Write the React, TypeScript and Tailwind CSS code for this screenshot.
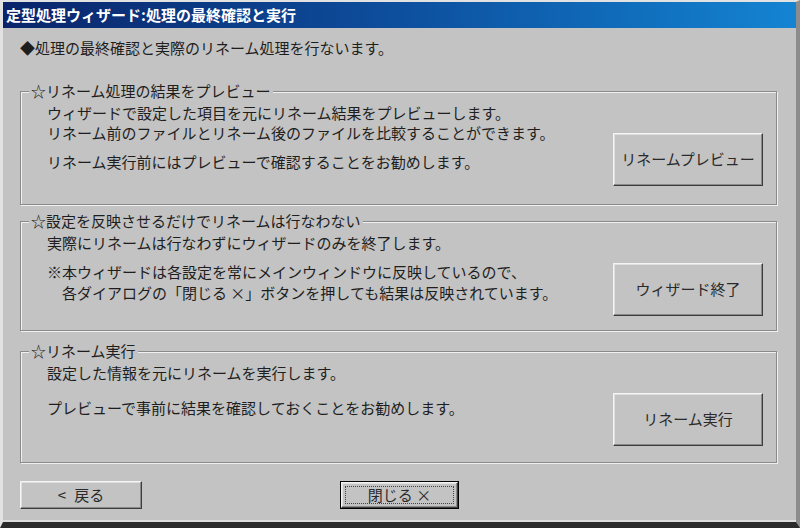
import type { ReactNode } from 'react';

const FONT = "font-['Noto_Sans_CJK_JP','Noto_Sans',sans-serif]";

function RaisedButton({ children, className = '' }: { children: ReactNode; className?: string }) {
  return (
    <button
      className={`flex items-center justify-center bg-[#c3c3c3] text-[15px] text-[#2a2a2a] border border-t-[#f4f4f4] border-l-[#f4f4f4] border-r-[#3c3c3c] border-b-[#3c3c3c] shadow-[inset_-1px_-1px_0_#8a8a8a,inset_1px_1px_0_#e0e0e0] ${className}`}
    >
      {children}
    </button>
  );
}

function GroupBox({
  legend,
  height,
  buttonLabel,
  children,
}: {
  legend: string;
  height: string;
  buttonLabel: string;
  children: ReactNode;
}) {
  return (
    <div
      className={`relative flex justify-between border border-[#8a8a8a] shadow-[inset_1px_1px_0_#f0f0f0,1px_1px_0_#f0f0f0] pl-[26px] pr-[13px] ${height}`}
    >
      {/* legend sits over the top edge */}
      <span className="absolute left-[8px] -top-[10px] px-[2px] bg-[#c3c3c3] text-[15px] leading-[18px] text-[#1e1e1e]">
        {legend}
      </span>
      <div className="pt-[11px] text-[15px] leading-[20px] text-[#1e1e1e]">{children}</div>
      <RaisedButton className="mt-[41px] w-[150px] h-[53px]">{buttonLabel}</RaisedButton>
    </div>
  );
}

export default function App() {
  return (
    <div
      className={`w-[800px] h-[528px] overflow-hidden bg-[#c3c3c3] flex flex-col border-l-[3px] border-t-[2px] border-r-[4px] border-b-[6px] border-l-[#e2e2e2] border-t-[#e2e2e2] border-r-[#8c8c8c] border-b-[#2a2a2a] shadow-[inset_0_-2px_0_#dcdcdc] ${FONT}`}
    >
      {/* Title bar */}
      <div className="h-[26px] shrink-0 flex items-center pl-[3px] bg-linear-to-r from-[#0a246a] via-[#0d4f9e] to-[#1484d2] text-white font-bold text-[15px]">
        定型処理ウィザード:処理の最終確認と実行
      </div>

      <div className="flex flex-col pl-[17px] pr-[19px] pt-[11px]">
        <div className="h-[18px] leading-[18px] text-[15px] text-[#1e1e1e]">
          ◆処理の最終確認と実際のリネーム処理を行ないます。
        </div>

        <div className="mt-[34px]">
          <GroupBox legend="☆リネーム処理の結果をプレビュー" height="h-[114px]" buttonLabel="リネームプレビュー">
            <div>ウィザードで設定した項目を元にリネーム結果をプレビューします。</div>
            <div>リネーム前のファイルとリネーム後のファイルを比較することができます。</div>
            <div className="mt-[9px]">リネーム実行前にはプレビューで確認することをお勧めします。</div>
          </GroupBox>
        </div>

        <div className="mt-[16px]">
          <GroupBox legend="☆設定を反映させるだけでリネームは行なわない" height="h-[110px]" buttonLabel="ウィザード終了">
            <div>実際にリネームは行なわずにウィザードのみを終了します。</div>
            <div className="mt-[9px]">※本ウィザードは各設定を常にメインウィンドウに反映しているので、</div>
            <div className="pl-[15px] leading-[22px]">各ダイアログの「閉じる ×」ボタンを押しても結果は反映されています。</div>
          </GroupBox>
        </div>

        <div className="mt-[20px]">
          <GroupBox legend="☆リネーム実行" height="h-[112px]" buttonLabel="リネーム実行">
            <div>設定した情報を元にリネームを実行します。</div>
            <div className="mt-[15px]">プレビューで事前に結果を確認しておくことをお勧めします。</div>
          </GroupBox>
        </div>

        {/* Bottom buttons */}
        <div className="mt-[18px] flex">
          <RaisedButton className="w-[122px] h-[28px]">
            <span>&lt;</span>
            <span className="ml-[8px]">戻る</span>
          </RaisedButton>
          <div className="ml-[198px] border border-black">
            <RaisedButton className="relative w-[117px] h-[26px]">
              <span className="absolute inset-[3px] border border-dotted border-[#444]" />
              閉じる ×
            </RaisedButton>
          </div>
        </div>
      </div>
    </div>
  );
}
